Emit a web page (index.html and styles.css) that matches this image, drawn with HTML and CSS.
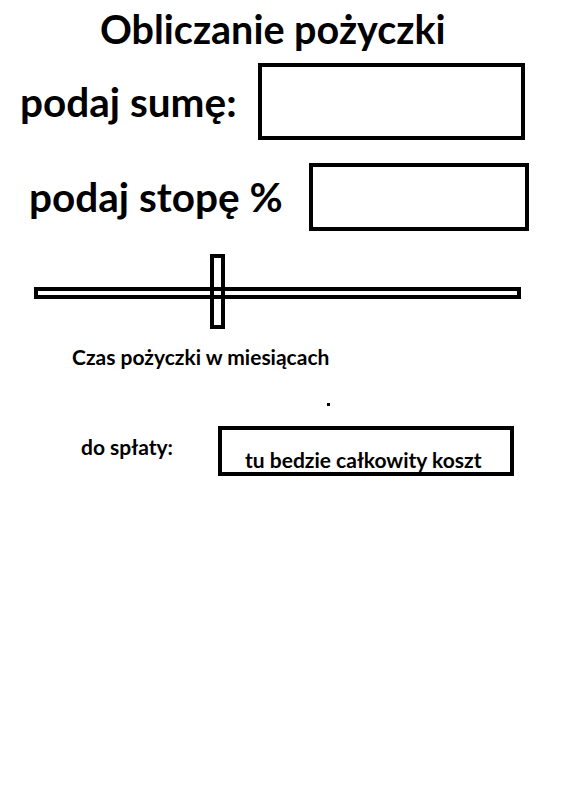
FILE: index.html
```html
<!DOCTYPE html>
<html lang="pl">
<head>
  <meta charset="UTF-8">
  <meta name="viewport" content="width=device-width, initial-scale=1.0">
  <title>Obliczanie pożyczki</title>
  <link rel="stylesheet" href="styles.css">
</head>
<body>
  <div id="app">
    <h1 class="title">Obliczanie pożyczki</h1>

    <div class="row row-sum">
      <label class="big-label" for="sum">podaj sumę:</label>
      <input class="box box-sum" type="text" id="sum">
    </div>

    <div class="row row-rate">
      <label class="big-label" for="rate">podaj stopę %</label>
      <input class="box box-rate" type="text" id="rate">
    </div>

    <div class="slider">
      <div class="track"></div>
      <div class="thumb"></div>
    </div>

    <div class="months">Czas pożyczki w miesiącach</div>
    <div class="dot-row"><span class="dot"></span></div>

    <div class="row row-result">
      <div class="small-label">do spłaty:</div>
      <div class="box box-result">tu bedzie całkowity koszt</div>
    </div>
  </div>
</body>
</html>
```

FILE: styles.css
```css
body {
  margin: 0;
  background: #fff;
  color: #000;
  font-family: Lato, 'Open Sans', sans-serif;
  font-weight: 700;
}

#app {
  width: 571px;
  height: 811px;
}

.title {
  margin: 0;
  padding: 6px 0 0 100px;
  font-size: 39.5px;
  line-height: 46px;
  font-weight: 700;
}

.row {
  display: flex;
  align-items: center;
}

.big-label {
  font-size: 40.5px;
  line-height: 46px;
  white-space: nowrap;
}

.box {
  box-sizing: border-box;
  border: 4px solid #000;
  background: #fff;
  margin: 0;
  padding: 0;
  font: inherit;
  outline: none;
}

.row-sum {
  margin-top: 11px;
  padding-left: 20px;
}

.row-sum .big-label {
  width: 238px;
}

.box-sum {
  width: 267px;
  height: 77px;
}

.row-rate {
  margin-top: 23px;
  padding-left: 29px;
}

.row-rate .big-label {
  width: 280px;
}

.box-rate {
  width: 220px;
  height: 68px;
}

.slider {
  position: relative;
  margin: 23px 0 0 34px;
  width: 487px;
  height: 75px;
}

.track {
  box-sizing: border-box;
  position: absolute;
  left: 0;
  top: 33px;
  width: 487px;
  height: 12px;
  border: 4px solid #000;
}

.thumb {
  box-sizing: border-box;
  position: absolute;
  left: 176px;
  top: 0;
  width: 15px;
  height: 75px;
  border: 4px solid #000;
}

.months {
  margin: 14px 0 0 72px;
  font-size: 21px;
  line-height: 28px;
}

.dot-row {
  height: 3px;
  padding: 32px 0 0 327px;
}

.dot {
  display: block;
  width: 3px;
  height: 3px;
  background: #000;
}

.row-result {
  margin-top: 20px;
  padding-left: 81px;
  align-items: flex-start;
}

.small-label {
  width: 137px;
  margin-top: 7px;
  font-size: 21px;
  line-height: 28px;
}

.box-result {
  width: 296px;
  height: 50px;
  padding: 17px 0 0 23px;
  font-size: 21px;
  line-height: 26px;
  white-space: nowrap;
}
```
